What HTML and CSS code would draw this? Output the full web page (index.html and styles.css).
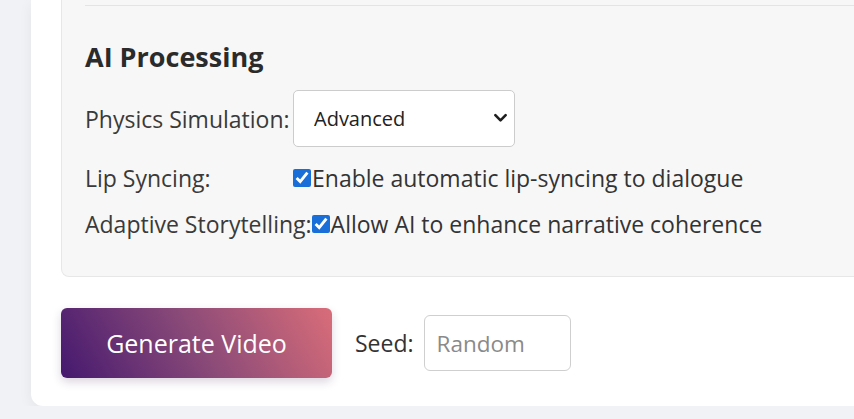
FILE: index.html
```html
<!DOCTYPE html>
<html lang="en">
<head>
<meta charset="utf-8">
<title>AI Processing</title>
<link rel="stylesheet" href="styles.css">
</head>
<body>
<div class="page">
  <div class="card">
    <section class="panel">
      <div class="divider"></div>
      <h3 class="panel-title">AI Processing</h3>
      <div class="row">
        <label class="row-label" for="physics">Physics Simulation:</label>
        <div class="select-wrap">
          <select id="physics" class="select">
            <option>Basic</option>
            <option selected>Advanced</option>
            <option>Realistic</option>
          </select>
          <svg class="chevron" viewBox="0 0 16 16" width="15" height="15" aria-hidden="true"><path d="M2.5 5.5 8 11l5.5-5.5" fill="none" stroke="#1e1e1e" stroke-width="2.8" stroke-linecap="round" stroke-linejoin="round"/></svg>
        </div>
      </div>
      <div class="row">
        <span class="row-label">Lip Syncing:</span>
        <label class="check"><input type="checkbox" checked>Enable automatic lip-syncing to dialogue</label>
      </div>
      <div class="row">
        <span class="row-label">Adaptive Storytelling:</span>
        <label class="check"><input type="checkbox" checked>Allow AI to enhance narrative coherence</label>
      </div>
    </section>
    <div class="actions">
      <button class="generate" type="button">Generate Video</button>
      <label class="seed-label" for="seed">Seed:</label>
      <input id="seed" class="seed-input" type="text" placeholder="Random">
    </div>
  </div>
</div>
</body>
</html>
```

FILE: styles.css
```css
html, body {
  margin: 0;
  padding: 0;
  overflow: hidden;
}
body {
  background: #f1f2f5;
  font-family: "Open Sans", "Noto Sans", sans-serif;
  color: #333;
}
.page {
  padding-left: 31px;
  width: 1200px;
}
.card {
  width: 1000px;
  background: #fff;
  border-radius: 0 0 12px 12px;
  padding: 0 30px 28px;
  box-shadow: 0 4px 14px rgba(0, 0, 0, 0.06);
}
.panel {
  background: #f7f7f7;
  border: 1px solid #e7e7e7;
  border-top: none;
  border-radius: 0 0 8px 8px;
  padding: 5px 23px 21px;
}
.divider {
  height: 1px;
  background: #e4e4e4;
}
.panel-title {
  margin: 34px 0 16px;
  font-size: 27px;
  line-height: 34px;
  font-weight: 700;
  color: #2b2b2b;
}
.row {
  display: flex;
  align-items: center;
  margin-bottom: 16px;
}
.row-label {
  min-width: 208px;
  font-size: 23px;
  line-height: 30px;
  color: #3a3a3a;
}
.row-label.wide {
  letter-spacing: 0.2px;
}
.select-wrap {
  position: relative;
}
.select {
  appearance: none;
  -webkit-appearance: none;
  display: block;
  width: 222px;
  height: 57px;
  padding: 0 40px 0 20px;
  font-family: inherit;
  font-size: 20px;
  color: #222;
  background: #fff;
  border: 1px solid #ccc;
  border-radius: 5px;
}
.chevron {
  position: absolute;
  right: 7px;
  top: 20px;
}
.check {
  display: flex;
  align-items: center;
  font-size: 23px;
  line-height: 30px;
  color: #333;
}
.check input {
  width: 18px;
  height: 18px;
  margin: 0 1px 0 0;
  accent-color: #1a6ed8;
}
.actions {
  display: flex;
  align-items: center;
  margin-top: 31px;
}
.generate {
  width: 271px;
  height: 70px;
  border: none;
  border-radius: 6px;
  background: linear-gradient(60deg, #45196f 0%, #8a4a78 50%, #d96d79 100%);
  color: #fff;
  font-family: inherit;
  font-size: 25px;
  box-shadow: 0 4px 10px rgba(60, 20, 80, 0.18);
}
.seed-label {
  margin-left: 23px;
  font-size: 23px;
  color: #333;
}
.seed-input {
  margin-left: 10px;
  width: 147px;
  height: 56px;
  box-sizing: border-box;
  padding: 0 12px;
  font-family: inherit;
  font-size: 22.5px;
  border: 1px solid #cfcfcf;
  border-radius: 6px;
}
.seed-input::placeholder {
  color: #8a8a8a;
}
```
